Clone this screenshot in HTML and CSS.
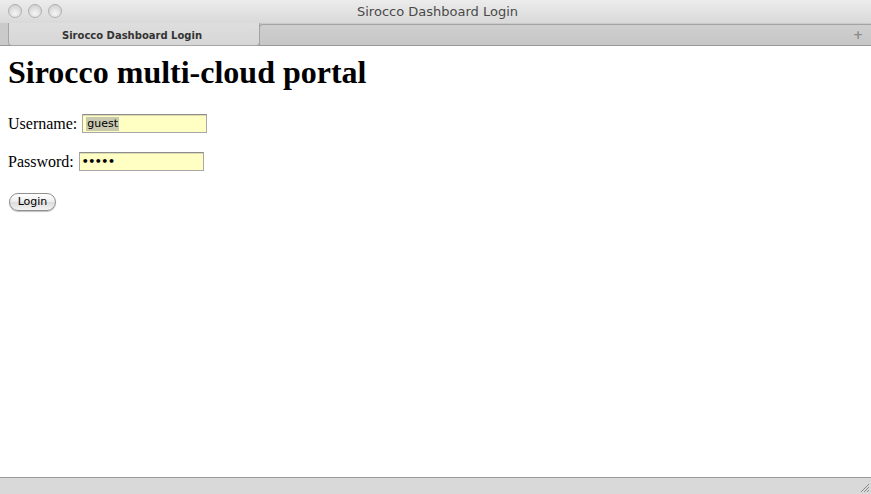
FILE: index.html
```html
<!DOCTYPE html>
<html>
<head>
<meta charset="utf-8">
<title>Sirocco Dashboard Login</title>
<link rel="stylesheet" href="styles.css">
</head>
<body>
<div class="window">
  <div class="titlebar">
    <div class="lights">
      <span class="light"></span><span class="light"></span><span class="light"></span>
    </div>
    <div class="title">Sirocco Dashboard Login</div>
  </div>
  <div class="tabbar">
    <div class="tab">Sirocco Dashboard Login</div>
    <div class="tabrest"><span class="plus">+</span></div>
  </div>
  <div class="content">
    <h1 class="heading">Sirocco multi-cloud portal</h1>
    <div class="row">Username: <span class="field user"><span class="sel">guest</span></span></div>
    <div class="row">Password: <span class="field pass">&bull;&bull;&bull;&bull;&bull;</span></div>
    <div class="row btnrow"><span class="button">Login</span></div>
  </div>
  <div class="statusbar">
    <svg class="grip" width="12" height="12" viewBox="0 0 12 12">
      <path d="M11 3 L3 11 M11 6 L6 11 M11 9 L9 11" stroke="#8a8a8a" stroke-width="1" fill="none"/>
    </svg>
  </div>
</div>
</body>
</html>
```
FILE: styles.css
```css
html, body {
  margin: 0;
  padding: 0;
  height: 100%;
  background: #ffffff;
}
.window {
  width: 871px;
  height: 494px;
  display: flex;
  flex-direction: column;
  overflow: hidden;
}
.titlebar {
  height: 23px;
  position: relative;
  display: flex;
  align-items: center;
  justify-content: center;
  background: linear-gradient(#ececec, #d9d9d9);
  flex: none;
}
.lights {
  position: absolute;
  left: 8px;
  top: 4px;
  display: flex;
  gap: 6px;
}
.light {
  width: 14px;
  height: 14px;
  border-radius: 50%;
  box-sizing: border-box;
  border: 1px solid #b0b0b0;
  background: radial-gradient(circle at 50% 70%, #f6f6f6, #d6d6d6 70%, #c4c4c4);
}
.title {
  font-family: "Lucida Grande", "DejaVu Sans", "Liberation Sans", sans-serif;
  font-size: 13px;
  color: #4a4a4a;
  margin-top: -1px;
  margin-left: 4px;
}
.tabbar {
  flex: none;
  display: flex;
  background: #cacaca;
  border-bottom: 1px solid #999999;
  box-sizing: border-box;
  height: 23px;
}
.tab {
  width: 252px;
  margin-left: 8px;
  background: linear-gradient(#dedede, #d6d6d6);
  border: 1px solid #a6a6a6;
  border-top: none;
  border-radius: 0 0 4px 4px;
  box-sizing: border-box;
  font-family: "Lucida Grande", "DejaVu Sans", "Liberation Sans", sans-serif;
  font-size: 10px;
  font-weight: bold;
  color: #333333;
  display: flex;
  align-items: center;
  justify-content: center;
  padding-top: 2px;
  padding-right: 4px;
  margin-right: -1px;
  margin-bottom: -1px;
}
.tabrest {
  flex: 1;
  border-top: 1px solid #a3a3a3;
  border-left: 1px solid #a3a3a3;
  border-radius: 4px 0 0 0;
  display: flex;
  justify-content: flex-end;
  align-items: center;
  padding-right: 8px;
  background: linear-gradient(#cfcfcf, #c6c6c6);
  margin-top: 1px;
}
.plus {
  font-family: "DejaVu Sans", sans-serif;
  font-size: 12px;
  color: #8a8a8a;
  font-weight: bold;
}
.content {
  flex: 1;
  padding: 0 8px;
  font-family: "Liberation Serif", "Times New Roman", serif;
  font-size: 16px;
  color: #000;
}
.heading {
  font-size: 32px;
  font-weight: bold;
  margin: 8px 0 23px 0;
  line-height: 37px;
}
.row {
  display: flex;
  align-items: center;
  height: 19px;
  margin-bottom: 19px;
  white-space: pre;
}
.field {
  display: inline-flex;
  align-items: center;
  box-sizing: border-box;
  width: 125px;
  height: 19px;
  margin-left: 1px;
  background: #ffffc4;
  border: 1px solid #a8a8a8;
  border-top-color: #8c8c8c;
  box-shadow: inset 0 1px 0 #dcdcb0;
  padding-left: 3px;
  font-family: "Lucida Grande", "DejaVu Sans", "Liberation Sans", sans-serif;
  font-size: 11px;
  color: #000;
}
.sel {
  background: #c9c9b0;
  padding: 0 1px;
  line-height: 14px;
}
.pass {
  font-size: 11px;
  font-weight: bold;
  padding-left: 2px;
  letter-spacing: -0.5px;
}
.btnrow {
  margin-top: 21px;
}
.button {
  display: inline-flex;
  align-items: center;
  justify-content: center;
  box-sizing: border-box;
  width: 47px;
  height: 18px;
  margin-left: 1px;
  border: 1px solid #8f8f8f;
  border-radius: 9px;
  background: linear-gradient(#ffffff, #ececec 50%, #dcdcdc 51%, #f3f3f3);
  box-shadow: 0 1px 1px rgba(0,0,0,0.25);
  font-family: "Lucida Grande", "DejaVu Sans", "Liberation Sans", sans-serif;
  font-size: 11px;
  color: #000;
}
.statusbar {
  height: 17px;
  flex: none;
  border-top: 1px solid #9a9a9a;
  background: #d9d9d9;
  box-sizing: border-box;
  display: flex;
  justify-content: flex-end;
  align-items: flex-end;
}
.grip {
  margin: 0 1px 1px 0;
}
```
